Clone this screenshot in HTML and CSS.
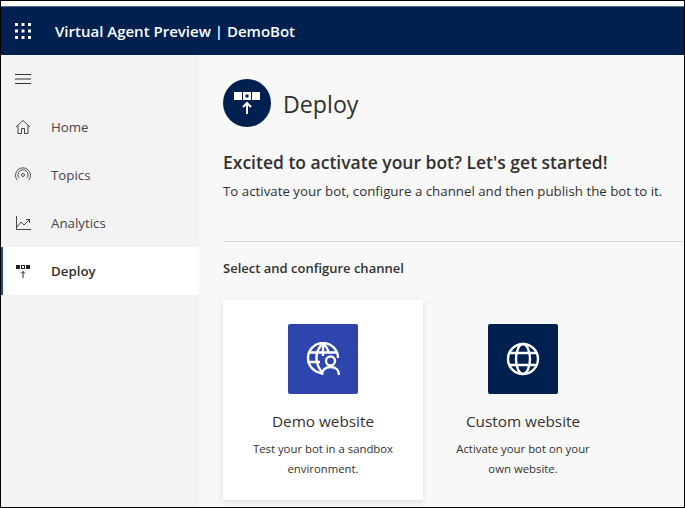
FILE: index.html
```html
<!DOCTYPE html>
<html lang="en">
<head>
<meta charset="utf-8">
<title>Deploy</title>
<link rel="stylesheet" href="styles.css">
</head>
<body>
<div class="frame">
  <header class="topbar">
    <svg class="waffle" width="16" height="16" viewBox="0 0 16 16" fill="#fff"><rect x="0" y="0" width="3" height="3"/><rect x="6.5" y="0" width="3" height="3"/><rect x="13" y="0" width="3" height="3"/><rect x="0" y="6.5" width="3" height="3"/><rect x="6.5" y="6.5" width="3" height="3"/><rect x="13" y="6.5" width="3" height="3"/><rect x="0" y="13" width="3" height="3"/><rect x="6.5" y="13" width="3" height="3"/><rect x="13" y="13" width="3" height="3"/></svg>
    <span class="app-title">Virtual Agent Preview | DemoBot</span>
  </header>
  <div class="body">
    <nav class="sidebar">
      <div class="menu-row">
        <svg width="16" height="12" viewBox="0 0 16 12" stroke="#333" fill="none"><path d="M0 1.5h16M0 6h16M0 10.5h16"/></svg>
      </div>
      <a class="nav-item">
        <svg class="nav-icon" width="16" height="16" viewBox="0 0 16 16" fill="none" stroke="#444"><path d="M1 8 8 1.5 15 8M3 6.5v8h3.5v-5h3v5H13v-8"/></svg>
        <span>Home</span>
      </a>
      <a class="nav-item">
        <svg class="nav-icon" width="16" height="16" viewBox="0 0 16 16" fill="none" stroke="#555"><circle cx="8" cy="8" r="1.5"/><path d="M4.2 11a5 5 0 1 1 7.6 0M2.3 13.2a7.5 7.5 0 1 1 11.4 0"/></svg>
        <span>Topics</span>
      </a>
      <a class="nav-item">
        <svg class="nav-icon" width="16" height="16" viewBox="0 0 16 16" fill="none" stroke="#444"><path d="M1.5 1v13.5H16M2 12l4-5 3 3 5.500-5.500M11 4.500h3.500V8"/></svg>
        <span>Analytics</span>
      </a>
      <a class="nav-item active">
        <svg class="nav-icon" width="16" height="16" viewBox="0 0 16 16"><rect x="1" y="2" width="4" height="4" fill="#222"/><rect x="6.500" y="2.500" width="3" height="3" fill="none" stroke="#222"/><rect x="11" y="2" width="4" height="4" fill="#222"/><path d="M8 15V8.500M6 10.500l2-2 2 2" fill="none" stroke="#222"/></svg>
        <span>Deploy</span>
      </a>
    </nav>
    <main class="content">
      <div class="page-head">
        <div class="page-badge">
          <svg width="28" height="28" viewBox="0 0 28 28"><rect x="1" y="3" width="8" height="8" fill="#fff"/><rect x="10" y="3" width="8" height="8" fill="#fff"/><rect x="12.500" y="5.500" width="3" height="3" fill="#002050"/><rect x="19" y="3" width="8" height="8" fill="#fff"/><path d="M14 25V14M10 18l4-4 4 4" fill="none" stroke="#fff" stroke-width="2"/></svg>
        </div>
        <h1 class="page-title">Deploy</h1>
      </div>
      <h2 class="lead">Excited to activate your bot? Let's get started!</h2>
      <p class="sub">To activate your bot, configure a channel and then publish the bot to it.</p>
      <hr class="rule">
      <h3 class="section">Select and configure channel</h3>
      <div class="cards">
        <article class="card raised">
          <div class="tile demo">
            <svg width="34" height="34" viewBox="0 0 34 34" fill="none" stroke="#fff" stroke-width="2.4"><path d="M17 31a15 15 0 1 1 15-15"/><path d="M17 1c-4 4-6.500 9-6.500 15s2.500 11 6.500 15M17 1c3 3 5 6 6 9.500M17 1v13M3 10.500h28M1.500 20H14"/><circle cx="24.500" cy="19" r="4.500" fill="#2e45ad"/><path d="M16 33c0-5 3.500-8 8.500-8s8.500 3 8.500 8" fill="#2e45ad"/></svg>
          </div>
          <h4 class="card-title">Demo website</h4>
          <p class="card-text">Test your bot in a sandbox environment.</p>
        </article>
        <article class="card">
          <div class="tile custom">
            <svg width="34" height="34" viewBox="0 0 34 34" fill="none" stroke="#fff" stroke-width="2.4"><circle cx="17" cy="17" r="15"/><ellipse cx="17" cy="17" rx="7" ry="15"/><path d="M3.500 11h27M3.500 23h27"/></svg>
          </div>
          <h4 class="card-title">Custom website</h4>
          <p class="card-text">Activate your bot on your own website.</p>
        </article>
      </div>
    </main>
  </div>
</div>
</body>
</html>
```
FILE: styles.css
```css
* { box-sizing: border-box; }
html, body { margin: 0; height: 100%; }
body { font-family: "Open Sans", "Noto Sans", sans-serif; color: #323130; overflow: hidden; background: #fff; }
.frame { width: 685px; height: 508px; border: 1px solid #000; padding-top: 5px; display: flex; flex-direction: column; overflow: hidden; background: #fff; }
.topbar { flex: 0 0 49px; background: #002050; border-top: 1px solid #5a6f8c; display: flex; align-items: center; padding-left: 14px; color: #fff; }
.app-title { margin-left: 24px; font-size: 15px; font-weight: 600; white-space: nowrap; }
.body { flex: 1; display: flex; min-height: 0; }
.sidebar { flex: 0 0 198px; background: #f3f3f3; }
.menu-row { height: 48px; display: flex; align-items: center; padding-left: 14px; }
.nav-item { height: 48px; display: flex; align-items: center; padding-left: 14px; font-size: 13.3px; color: #484644; }
.nav-icon { flex: none; margin-right: 20px; }
.nav-item.active { background: #fff; color: #323130; font-weight: 600; box-shadow: inset 2px 0 0 #1f4e86; }
.content { flex: 1; background: #f8f8f8; padding: 24px 0 0 24px; min-width: 0; }
.page-head { display: flex; align-items: center; gap: 12px; }
.page-badge { width: 48px; height: 48px; border-radius: 50%; background: #002050; display: flex; align-items: center; justify-content: center; }
.page-title { margin: 0; padding-top: 2px; font-size: 23.2px; font-weight: 400; }
.lead { margin: 23px 0 0; font-size: 17.5px; font-weight: 600; line-height: 24px; white-space: nowrap; }
.sub { margin: 7px 0 0; font-size: 13.3px; line-height: 20px; white-space: nowrap; }
.rule { margin: 40px 0 0; border: 0; border-top: 1px solid #d8d8d8; }
.section { margin: 16px 0 0; font-size: 13px; font-weight: 600; line-height: 20px; }
.cards { display: flex; margin-top: 22px; }
.card { width: 200px; height: 200px; padding-top: 24px; text-align: center; }
.card.raised { background: #fff; box-shadow: 0 2px 6px rgba(0,0,0,.1); }
.tile { width: 70px; height: 70px; border-radius: 2px; margin: 0 auto; display: flex; align-items: center; justify-content: center; }
.tile.demo { background: #2e45ad; }
.tile.custom { background: #002050; }
.card-title { margin: 17px 0 0; font-size: 15.3px; font-weight: 500; line-height: 20px; }
.card-text { margin: 8px auto 0; width: 150px; font-size: 11.35px; line-height: 20px; }
```
